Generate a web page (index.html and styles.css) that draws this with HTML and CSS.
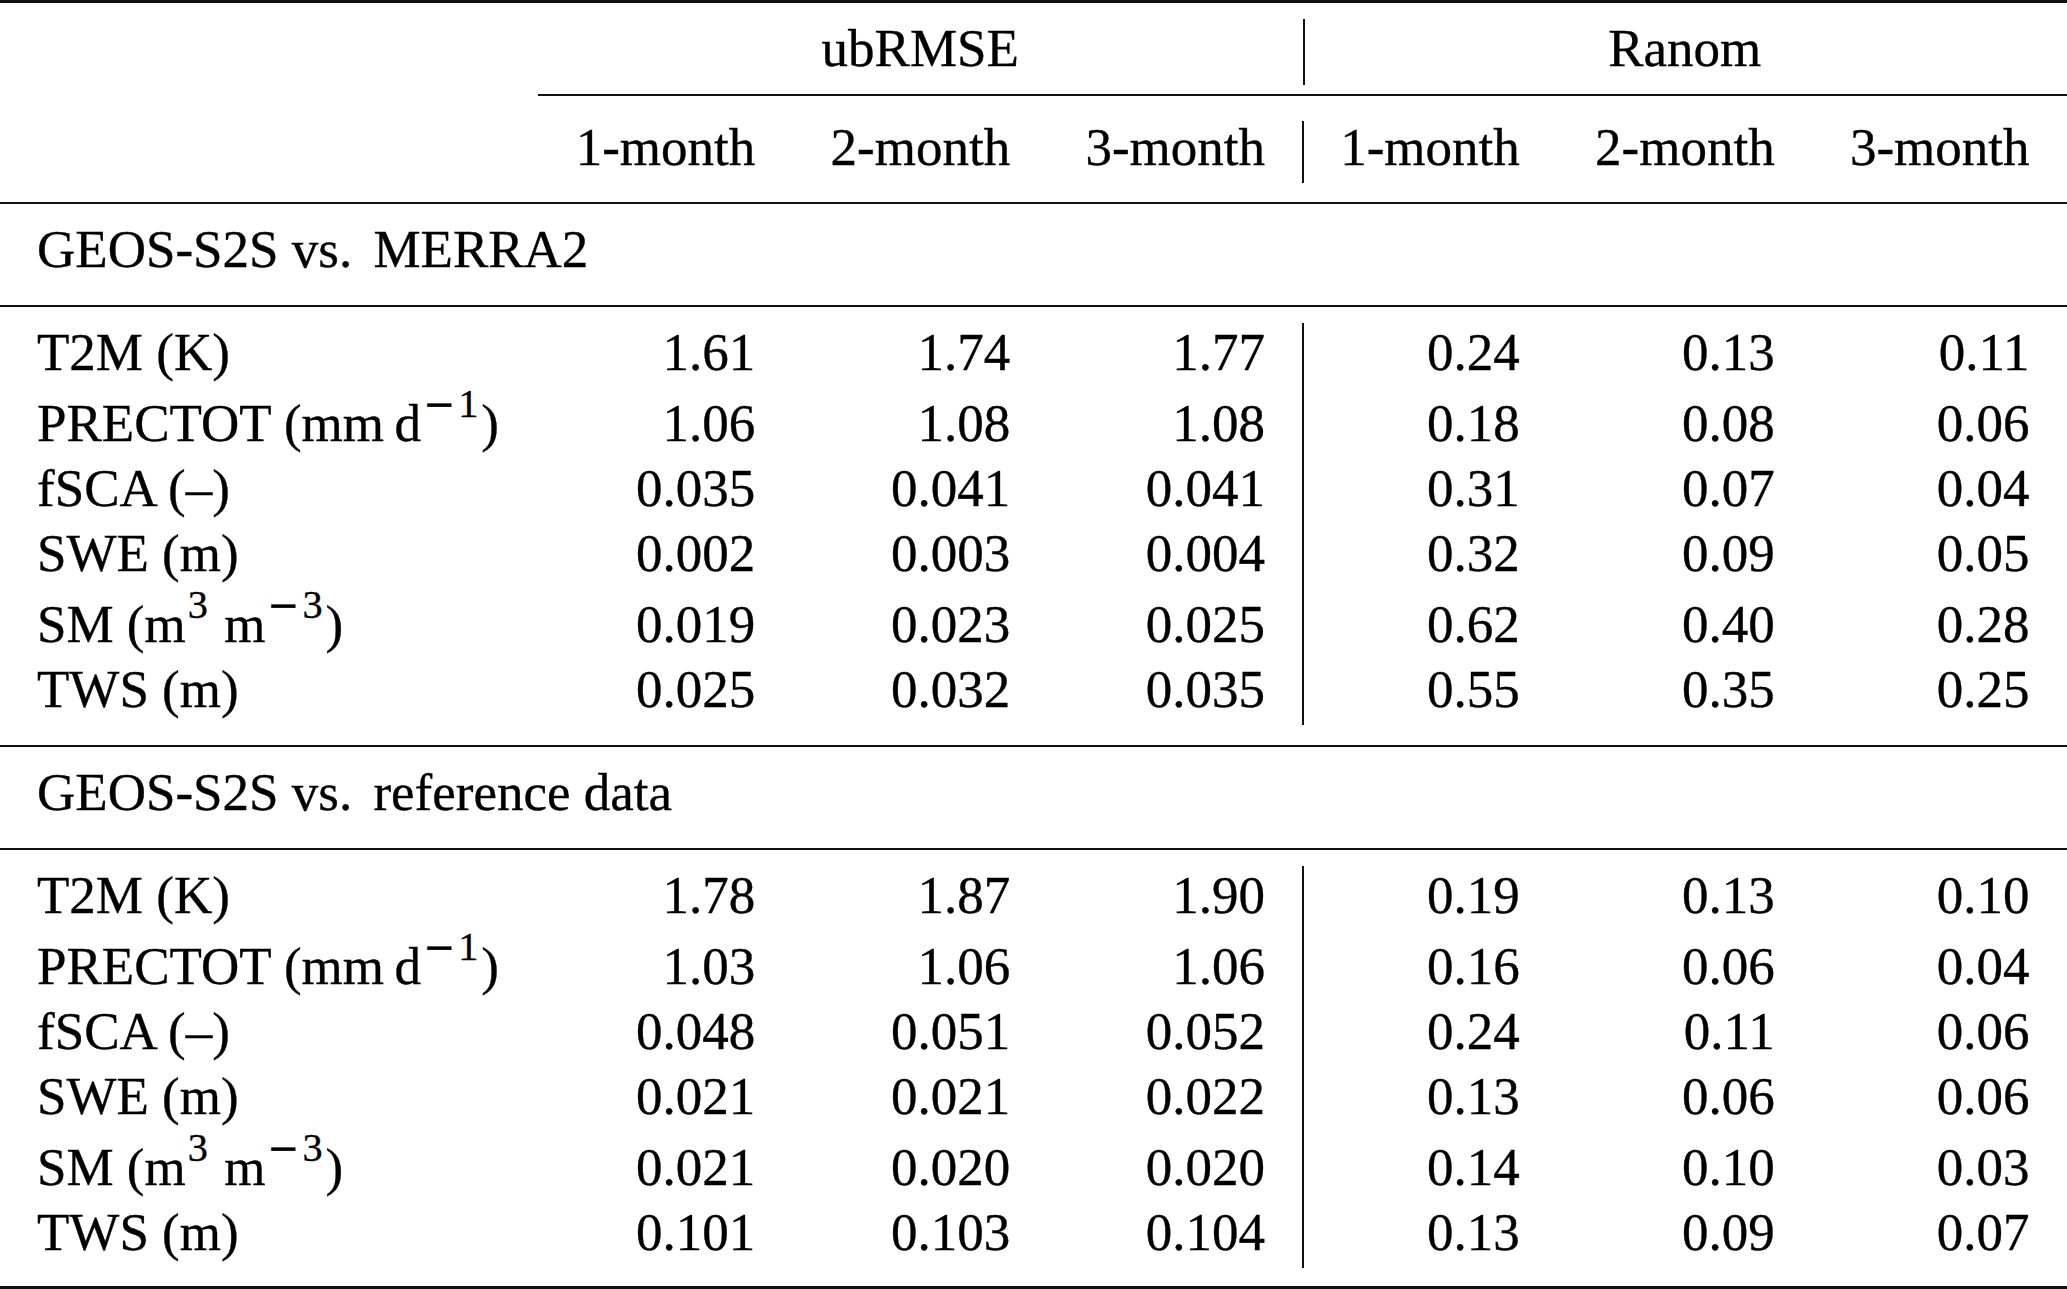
FILE: index.html
```html
<!DOCTYPE html>
<html lang="en">
<head>
<meta charset="utf-8">
<title>GEOS-S2S skill table</title>
<link rel="stylesheet" href="styles.css">
</head>
<body>
<div class="table">
  <div class="head">
    <div class="row head-top">
      <div class="cell label"></div>
      <div class="cell span3">ubRMSE</div>
      <div class="cell span3 bar">Ranom</div>
    </div>
    <div class="cline"></div>
    <div class="row head-sub">
      <div class="cell label"></div>
      <div class="cell">1-month</div>
      <div class="cell">2-month</div>
      <div class="cell">3-month</div>
      <div class="cell bar">1-month</div>
      <div class="cell">2-month</div>
      <div class="cell">3-month</div>
    </div>
  </div>

  <div class="group"><div class="cell label">GEOS-S2S vs.<span class="xs"></span> MERRA2</div></div>
  <div class="body">
    <div class="row"><div class="cell label">T2M (K)</div><div class="cell">1.61</div><div class="cell">1.74</div><div class="cell">1.77</div><div class="cell bar">0.24</div><div class="cell">0.13</div><div class="cell">0.11</div></div>
    <div class="row tall"><div class="cell label">PRECTOT (mm&#8201;d<sup class="sup"><span class="minus">&minus;</span>1</sup>)</div><div class="cell">1.06</div><div class="cell">1.08</div><div class="cell">1.08</div><div class="cell bar">0.18</div><div class="cell">0.08</div><div class="cell">0.06</div></div>
    <div class="row"><div class="cell label">fSCA (&ndash;)</div><div class="cell">0.035</div><div class="cell">0.041</div><div class="cell">0.041</div><div class="cell bar">0.31</div><div class="cell">0.07</div><div class="cell">0.04</div></div>
    <div class="row"><div class="cell label">SWE (m)</div><div class="cell">0.002</div><div class="cell">0.003</div><div class="cell">0.004</div><div class="cell bar">0.32</div><div class="cell">0.09</div><div class="cell">0.05</div></div>
    <div class="row tall"><div class="cell label">SM (m<sup class="sup">3</sup> m<sup class="sup"><span class="minus">&minus;</span>3</sup>)</div><div class="cell">0.019</div><div class="cell">0.023</div><div class="cell">0.025</div><div class="cell bar">0.62</div><div class="cell">0.40</div><div class="cell">0.28</div></div>
    <div class="row"><div class="cell label">TWS (m)</div><div class="cell">0.025</div><div class="cell">0.032</div><div class="cell">0.035</div><div class="cell bar">0.55</div><div class="cell">0.35</div><div class="cell">0.25</div></div>
  </div>

  <div class="group"><div class="cell label">GEOS-S2S vs.<span class="xs"></span> reference data</div></div>
  <div class="body">
    <div class="row"><div class="cell label">T2M (K)</div><div class="cell">1.78</div><div class="cell">1.87</div><div class="cell">1.90</div><div class="cell bar">0.19</div><div class="cell">0.13</div><div class="cell">0.10</div></div>
    <div class="row tall"><div class="cell label">PRECTOT (mm&#8201;d<sup class="sup"><span class="minus">&minus;</span>1</sup>)</div><div class="cell">1.03</div><div class="cell">1.06</div><div class="cell">1.06</div><div class="cell bar">0.16</div><div class="cell">0.06</div><div class="cell">0.04</div></div>
    <div class="row"><div class="cell label">fSCA (&ndash;)</div><div class="cell">0.048</div><div class="cell">0.051</div><div class="cell">0.052</div><div class="cell bar">0.24</div><div class="cell">0.11</div><div class="cell">0.06</div></div>
    <div class="row"><div class="cell label">SWE (m)</div><div class="cell">0.021</div><div class="cell">0.021</div><div class="cell">0.022</div><div class="cell bar">0.13</div><div class="cell">0.06</div><div class="cell">0.06</div></div>
    <div class="row tall"><div class="cell label">SM (m<sup class="sup">3</sup> m<sup class="sup"><span class="minus">&minus;</span>3</sup>)</div><div class="cell">0.021</div><div class="cell">0.020</div><div class="cell">0.020</div><div class="cell bar">0.14</div><div class="cell">0.10</div><div class="cell">0.03</div></div>
    <div class="row"><div class="cell label">TWS (m)</div><div class="cell">0.101</div><div class="cell">0.103</div><div class="cell">0.104</div><div class="cell bar">0.13</div><div class="cell">0.09</div><div class="cell">0.07</div></div>
  </div>
</div>
</body>
</html>
```

FILE: styles.css
```css
html, body {
  margin: 0;
  padding: 0;
  background: #ffffff;
}

body {
  font-family: "Liberation Serif", "Times New Roman", serif;
  font-size: 53px;
  color: #000000;
  -webkit-text-stroke: 0.35px #000000;
}

.table {
  width: 2067px;
  border-top: 3px solid #111111;
  border-bottom: 3px solid #111111;
}

.row {
  display: grid;
  grid-template-columns: 538px repeat(6, 1fr);
}

.cell {
  padding: 0 37.5px 7px 37.5px;
  line-height: 58px;
  text-align: right;
  white-space: nowrap;
}

.label {
  text-align: left;
  padding-left: 37px;
}

.span3 {
  grid-column: span 3;
  text-align: center;
}

.bar {
  border-left: 2px solid #111111;
  padding-left: 35.5px;
}

.head {
  padding: 16px 0 19px 0;
  border-bottom: 2px solid #111111;
}

.head-top .cell {
  padding-bottom: 8px;
}

.cline {
  margin: 9px 0 25px 538px;
  border-top: 2px solid #111111;
}

.head-sub .cell {
  line-height: 52px;
  padding-bottom: 10px;
}

.group {
  padding: 16px 0 20px 0;
  border-bottom: 2px solid #111111;
}

.xs {
  display: inline-block;
  width: 8px;
}

.body {
  padding: 16px 0 20px 0;
  border-bottom: 2px solid #111111;
}

.body:last-child {
  padding-bottom: 18px;
  border-bottom: none;
}

.tall .cell {
  padding-top: 6px;
}

.sup {
  font-size: 0.76em;
  line-height: 0;
  vertical-align: 24px;
  padding-left: 2px;
  padding-right: 3px;
}

.minus {
  font-family: "DejaVu Serif", serif;
  font-size: 0.95em;
  padding-right: 3px;
}
```
